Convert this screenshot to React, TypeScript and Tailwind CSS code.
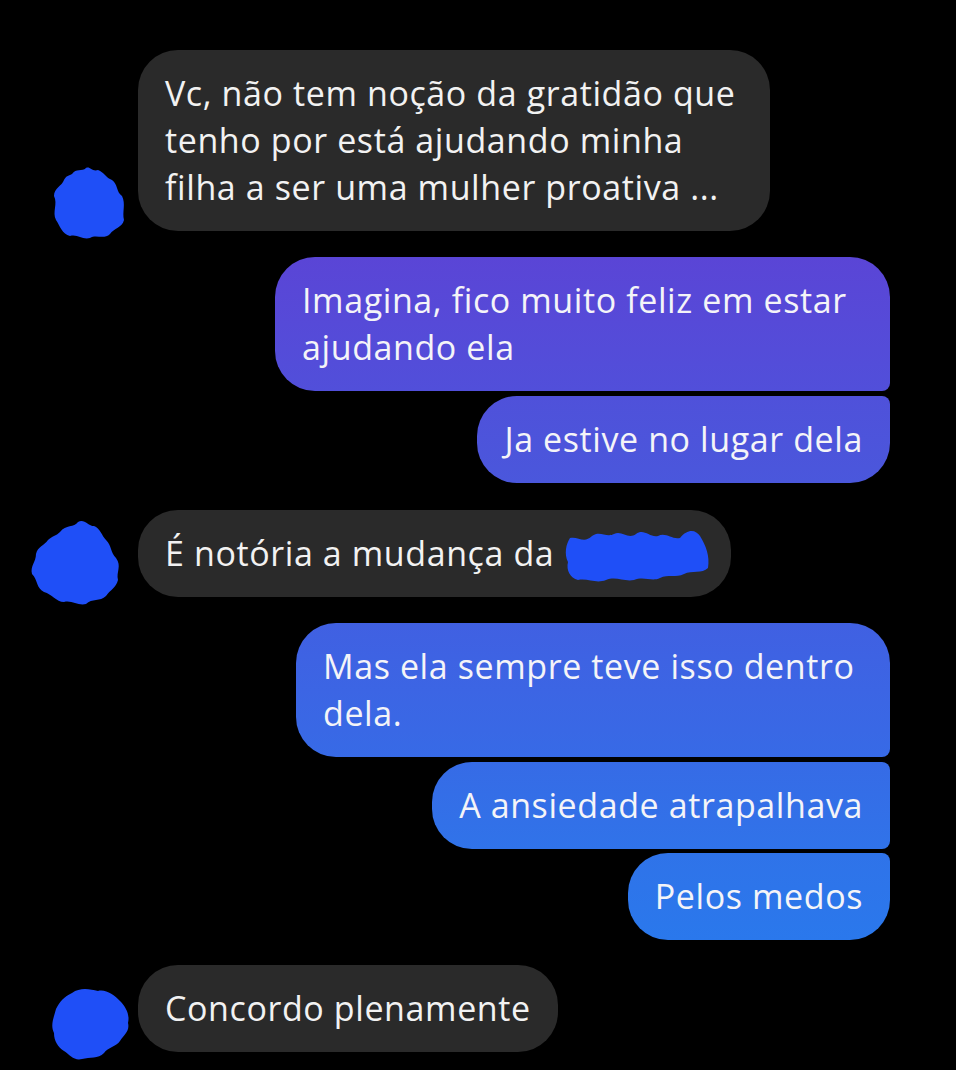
import type { ReactNode } from 'react';

const font = { fontFamily: '"Open Sans", Roboto, sans-serif' };

function Blob({ d, w, h }: { d: string; w: number; h: number }) {
  return (
    <svg width={w} height={h} viewBox={`0 0 ${w} ${h}`} className="block">
      <path d={d} fill="#1f4ff7" />
    </svg>
  );
}

function Received({ children, avatar, pad, className = '' }: { children: ReactNode; avatar: ReactNode; pad: string; className?: string }) {
  return (
    <div className="flex items-end">
      <div className={`w-[138px] shrink-0 flex -mb-[9px] ${pad}`}>{avatar}</div>
      <div className={`bg-[#2a2a2a] rounded-[40px] px-[27px] py-[20px] text-[#f2f2f2] ${className}`}>{children}</div>
    </div>
  );
}

function Sent({ children, className }: { children: ReactNode; className: string }) {
  return (
    <div className="flex justify-end">
      <div className={`px-[27px] py-[20px] text-[#f4f4f8] bg-linear-to-b ${className}`}>{children}</div>
    </div>
  );
}

export default function App() {
  return (
    <div className="w-[956px] h-[1070px] bg-black overflow-hidden pt-[50px] pr-[66px] flex flex-col text-[34px] leading-[47px] tracking-[0.6px]" style={font}>
      <Received
        pad="pl-[52px]"
        avatar={<Blob w={74} h={76} d="M20 10 C24 4 30 8 34 4 C38 2 40 8 46 6 C52 8 54 14 60 16 C66 20 64 28 70 32 C74 40 70 48 72 56 C70 64 62 64 58 70 C52 76 44 70 38 74 C30 76 26 70 18 72 C10 70 8 62 4 56 C0 48 6 40 2 32 C2 24 10 22 12 16 C14 12 16 12 20 10 Z" />}
        className="w-[632px]"
      >
        Vc, não tem noção da gratidão que<br />tenho por está ajudando minha<br />filha a ser uma mulher proativa ...
      </Received>

      <div className="h-[26px]" />
      <Sent className="w-[615px] rounded-[40px] rounded-br-[8px] from-[#5a45d6] to-[#514fda]">
        Imagina, fico muito feliz em estar<br />ajudando ela
      </Sent>
      <div className="h-[5px]" />
      <Sent className="rounded-[40px] rounded-tr-[8px] from-[#4f51da] to-[#4a57dc]">Ja estive no lugar dela</Sent>

      <div className="h-[27px]" />
      <Received
        pad="pl-[30px]"
        avatar={<Blob w={92} h={88} d="M30 14 C36 6 44 10 48 4 C54 0 58 8 64 8 C70 10 72 18 76 22 C82 28 80 34 86 40 C92 48 86 54 88 62 C86 70 80 72 76 78 C70 84 62 80 56 86 C48 88 42 82 34 84 C26 84 22 76 14 74 C6 70 8 62 2 56 C0 48 6 44 6 36 C8 28 14 28 18 22 C22 18 26 18 30 14 Z" />}
      >
        <span className="inline-flex items-center">
          É notória a mudança da
          <svg width="150" height="60" viewBox="0 0 150 60" className="-my-[8px] ml-[8px] -mr-[8px]">
            <path d="M8 14 C16 12 22 20 30 12 C38 6 44 14 52 10 C60 6 66 16 74 10 C82 4 88 14 96 12 C104 8 110 16 118 14 C126 4 134 6 138 12 C144 22 148 32 146 44 C140 50 130 46 122 50 C114 54 106 50 98 54 C90 58 82 52 72 56 C62 58 54 52 44 56 C34 60 26 54 16 56 C8 54 4 46 6 38 C2 30 4 20 8 14 Z" fill="#1f4ff7" />
          </svg>
        </span>
      </Received>

      <div className="h-[26px]" />
      <Sent className="w-[594px] rounded-[40px] rounded-br-[8px] from-[#4060e2] to-[#376ae6]">
        Mas ela sempre teve isso dentro<br />dela.
      </Sent>
      <div className="h-[5px]" />
      <Sent className="rounded-[40px] rounded-r-[8px] from-[#366be6] to-[#3073e9]">A ansiedade atrapalhava</Sent>
      <div className="h-[4px]" />
      <Sent className="rounded-[40px] rounded-tr-[8px] from-[#2f73e9] to-[#2a78ec]">Pelos medos</Sent>

      <div className="h-[25px]" />
      <Received
        pad="pl-[50px]"
        avatar={<Blob w={80} h={76} d="M22 8 C30 2 40 4 48 6 C56 4 64 10 70 16 C76 22 80 30 78 38 C80 46 74 50 70 56 C66 62 58 62 54 68 C48 74 40 72 32 74 C24 76 20 70 14 66 C8 62 4 56 4 48 C0 40 4 32 6 24 C10 16 14 12 22 8 Z" />}
      >
        Concordo plenamente
      </Received>
    </div>
  );
}
